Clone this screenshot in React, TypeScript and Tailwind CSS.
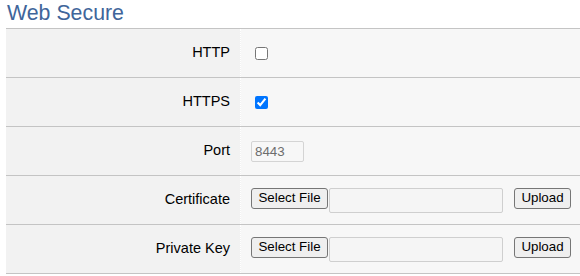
export default function App() {
  const label = "flex items-center justify-end pr-[10px] bg-[#f2f2f2] border-r border-dotted border-white";
  const cell = "flex items-center pl-[10px] bg-[#f7f7f7]";
  const btn = "h-[21px] border border-[#767676] rounded-[3px] bg-[#efefef] text-[13.33px] leading-none text-black";

  const fileRow = (name: string) => (
    <div className="grid grid-cols-[235px_1fr] h-[49px] border-b border-[#c4c4c4]">
      <div className={label}>{name}</div>
      <div className={cell}>
        <div className="flex items-start">
          <button className={`${btn} w-[77px]`}>Select File</button>
          <input
            type="text"
            readOnly
            className="ml-[1px] w-[174px] h-[25px] border border-[#cfcfcf] rounded-[2px] bg-[#f5f5f5]"
          />
          <button className={`${btn} w-[57px] ml-[11px]`}>Upload</button>
        </div>
      </div>
    </div>
  );

  return (
    <div className="w-[580px] h-[276px] bg-white overflow-hidden font-['Liberation_Sans',Arial,sans-serif] text-[14.5px] text-black">
      <div className="h-[28px] pt-[3px] pl-[7px] text-[21.33px] leading-none text-[#40659a]">Web Secure</div>
      <div className="ml-[6px] border-t border-[#c4c4c4]">
        <div className="grid grid-cols-[235px_1fr] h-[49px] border-b border-[#c4c4c4]">
          <div className={label}>HTTP</div>
          <div className={cell}>
            <input type="checkbox" className="ml-[4px] w-[13px] h-[13px]" />
          </div>
        </div>
        <div className="grid grid-cols-[235px_1fr] h-[49px] border-b border-[#c4c4c4]">
          <div className={label}>HTTPS</div>
          <div className={cell}>
            <input type="checkbox" defaultChecked className="ml-[4px] w-[13px] h-[13px]" />
          </div>
        </div>
        <div className="grid grid-cols-[235px_1fr] h-[49px] border-b border-[#c4c4c4]">
          <div className={label}>Port</div>
          <div className={cell}>
            <input
              type="text"
              defaultValue="8443"
              disabled
              className="w-[53px] h-[21px] px-[3px] border border-[#d4d4d4] rounded-[2px] bg-[#f7f7f7] text-[13.33px] text-[#6d6d6d]"
            />
          </div>
        </div>
        {fileRow("Certificate")}
        {fileRow("Private Key")}
      </div>
    </div>
  );
}
